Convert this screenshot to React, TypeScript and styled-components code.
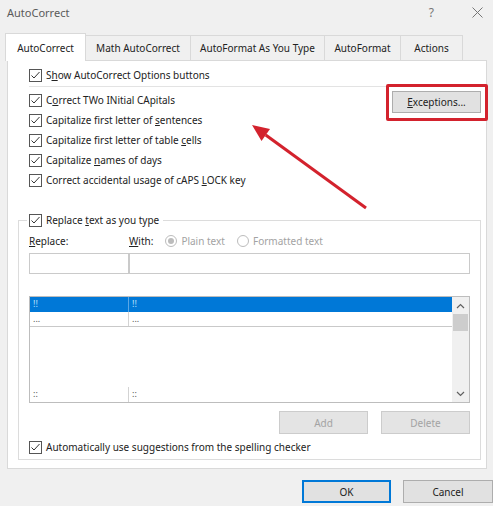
import styled, { createGlobalStyle } from 'styled-components';

const GlobalStyle = createGlobalStyle`
  html, body {
    margin: 0;
    padding: 0;
    background: #f0f0f0;
  }
  body {
    font-family: 'Noto Sans', 'Liberation Sans', sans-serif;
    font-size: 10px;
    color: #222;
  }
  * {
    box-sizing: border-box;
  }
`;

const Window = styled.div`
  position: relative;
  width: 493px;
  height: 506px;
  overflow: hidden;
  background: #f0f0f0;
  display: flex;
  flex-direction: column;
`;

const TitleBar = styled.div`
  height: 24px;
  display: flex;
  align-items: center;
  justify-content: space-between;
  padding: 0 10px 0 7px;
  color: #5a5a5a;
  font-size: 11px;
`;

const TitleButtons = styled.div`
  display: flex;
  align-items: center;
  gap: 38px;
  color: #767676;
  font-size: 12px;
`;

const TabStrip = styled.div`
  position: relative;
  z-index: 1;
  display: flex;
  align-items: flex-end;
  height: 28px;
  margin: 9px 0 -1px;
  padding-left: 5px;
`;

const Tab = styled.div<{ $active?: boolean; $w: number }>`
  width: ${(p) => p.$w}px;
  height: ${(p) => (p.$active ? 28 : 26)}px;
  margin-right: -1px;
  display: flex;
  align-items: center;
  justify-content: center;
  white-space: nowrap;
  background: ${(p) => (p.$active ? '#fff' : '#f0f0f0')};
  border: 1px solid #d9d9d9;
  border-bottom: ${(p) => (p.$active ? 'none' : '1px solid #d9d9d9')};
  z-index: ${(p) => (p.$active ? 2 : 1)};
`;

const Panel = styled.div`
  margin: 0 6px 0 7px;
  padding: 4px 5px 0 10px;
  background: #fff;
  border: 1px solid #d9d9d9;
  display: flex;
  flex-direction: column;
`;

const CheckRow = styled.div<{ $h?: number }>`
  height: ${(p) => p.$h ?? 20}px;
  display: flex;
  align-items: center;
  gap: 4px;
  white-space: nowrap;
`;

const Box = styled.span`
  width: 13px;
  height: 13px;
  border: 1px solid #555;
  background: #fff;
  display: inline-flex;
  align-items: center;
  justify-content: center;
  flex: none;
`;

const Indented = styled.div`
  padding-left: 11px;
`;

const Separator = styled.div`
  height: 1px;
  margin: 1px 2px 3px 11px;
  background: #e3e3e3;
`;

const OptionGroup = styled.div`
  display: flex;
  justify-content: space-between;
  align-items: flex-start;
  padding-left: 11px;
`;

const PushButton = styled.button<{ $w: number; $primary?: boolean; $disabled?: boolean }>`
  width: ${(p) => p.$w}px;
  height: 23px;
  padding: 0;
  font: inherit;
  color: ${(p) => (p.$disabled ? '#a3a3a3' : '#222')};
  background: ${(p) => (p.$disabled ? '#e4e4e4' : '#e1e1e1')};
  border: 1px solid ${(p) => (p.$primary ? '#0078d7' : p.$disabled ? '#cccccc' : '#adadad')};
  box-shadow: ${(p) => (p.$primary ? 'inset 0 0 0 1px #0078d7' : 'none')};
  flex: none;
`;

const ExceptionsButton = styled(PushButton)`
  margin-top: 1px;
  height: 22px;
`;

const Group = styled.fieldset`
  margin: 20px 0 8px;
  padding: 2px 10px 3px;
  min-width: 0;
  border: 1px solid #dcdcdc;
`;

const Legend = styled.legend`
  padding: 0 4px 0 2px;
  margin-left: -2px;
`;

const LabelRow = styled.div`
  height: 18px;
  display: flex;
  align-items: center;
`;

const FieldLabel = styled.span<{ $w?: number }>`
  width: ${(p) => (p.$w ? `${p.$w}px` : 'auto')};
  flex: none;
`;

const RadioOption = styled.span<{ $gap: number }>`
  display: inline-flex;
  align-items: center;
  gap: 4px;
  color: #a3a3a3;
  margin-left: ${(p) => p.$gap}px;
`;

const Radio = styled.span<{ $on?: boolean }>`
  width: 12px;
  height: 12px;
  border-radius: 50%;
  border: 1px solid #bcbcbc;
  background: #fff;
  display: inline-flex;
  align-items: center;
  justify-content: center;
  &::after {
    content: '';
    width: 6px;
    height: 6px;
    border-radius: 50%;
    background: ${(p) => (p.$on ? '#bcbcbc' : 'transparent')};
  }
`;

const InputRow = styled.div`
  margin-top: 3px;
  display: flex;
  height: 21px;
`;

const TextBox = styled.input<{ $w?: number }>`
  width: ${(p) => (p.$w ? `${p.$w}px` : 'auto')};
  flex: ${(p) => (p.$w ? 'none' : '1')};
  height: 21px;
  margin: 0;
  padding: 0 3px;
  border: 1px solid #cacaca;
  background: #fff;
  font: inherit;
  outline: none;
  min-width: 0;
`;

const EntryList = styled.div`
  margin-top: 22px;
  height: 107px;
  display: flex;
  border: 1px solid #bdbdbd;
  background: #fff;
`;

const ListBody = styled.div`
  flex: 1;
  display: flex;
  flex-direction: column;
`;

const ListRow = styled.div<{ $selected?: boolean; $ruled?: boolean }>`
  height: 15px;
  display: grid;
  grid-template-columns: 99px 1fr;
  background: ${(p) => (p.$selected ? '#0078d7' : '#fff')};
  border-bottom: ${(p) => (p.$ruled ? '1px solid #c9c9c9' : 'none')};
  color: ${(p) => (p.$selected ? '#bfe0fb' : '#555')};
  font-size: 9px;
  line-height: 14px;
`;

const Cell = styled.span<{ $divider?: boolean; $selected?: boolean }>`
  padding-left: 3px;
  border-right: ${(p) => (p.$divider ? `1px solid ${p.$selected ? '#5aa7e6' : '#d3d3d3'}` : 'none')};
`;

const ListGap = styled.div`
  flex: 1;
`;

const ScrollBar = styled.div`
  width: 17px;
  display: flex;
  flex-direction: column;
  background: #f0f0f0;
`;

const ScrollArrow = styled.div`
  height: 17px;
  display: flex;
  align-items: center;
  justify-content: center;
  flex: none;
`;

const Thumb = styled.div`
  height: 17px;
  margin: 0 1px;
  background: #cdcdcd;
`;

const ButtonRow = styled.div`
  margin-top: 8px;
  display: flex;
  justify-content: flex-end;
  gap: 13px;
`;

const AutoRow = styled(CheckRow)`
  margin-top: 4px;
`;

const Footer = styled.div`
  margin-top: 11px;
  display: flex;
  justify-content: flex-end;
  gap: 12px;
`;

const Highlight = styled.div`
  position: absolute;
  left: 386px;
  top: 84px;
  width: 102px;
  height: 37px;
  border: 3px solid #d3222d;
  border-radius: 2px;
`;

const Annotation = styled.svg`
  position: absolute;
  left: 0;
  top: 0;
  pointer-events: none;
`;

function Check() {
  return (
    <Box>
      <svg width="11" height="11" viewBox="0 0 11 11">
        <polyline points="1.5,5.5 4,8 9.5,2" fill="none" stroke="#333" strokeWidth="1" />
      </svg>
    </Box>
  );
}

function Chevron({ down }: { down?: boolean }) {
  return (
    <svg width="9" height="6" viewBox="0 0 9 6">
      <polyline
        points={down ? '1,1 4.5,4.5 8,1' : '1,5 4.5,1.5 8,5'}
        fill="none"
        stroke="#606060"
        strokeWidth="1.2"
      />
    </svg>
  );
}

export default function App() {
  return (
    <>
      <GlobalStyle />
      <Window>
        <TitleBar>
          <span>AutoCorrect</span>
          <TitleButtons>
            <span>?</span>
            <svg width="11" height="11" viewBox="0 0 11 11">
              <path d="M0.5 0.5 L10.5 10.5 M10.5 0.5 L0.5 10.5" stroke="#767676" strokeWidth="1" />
            </svg>
          </TitleButtons>
        </TitleBar>

        <TabStrip>
          <Tab $active $w={81}>AutoCorrect</Tab>
          <Tab $w={106}>Math AutoCorrect</Tab>
          <Tab $w={135}>AutoFormat As You Type</Tab>
          <Tab $w={77}>AutoFormat</Tab>
          <Tab $w={63}>Actions</Tab>
        </TabStrip>

        <Panel>
          <Indented>
            <CheckRow>
              <Check />
              <span>
                S<u>h</u>ow AutoCorrect Options buttons
              </span>
            </CheckRow>
          </Indented>
          <Separator />
          <OptionGroup>
            <div>
              <CheckRow>
                <Check />
                <span>
                  C<u>o</u>rrect TWo INitial CApitals
                </span>
              </CheckRow>
              <CheckRow>
                <Check />
                <span>
                  Capitalize first letter of <u>s</u>entences
                </span>
              </CheckRow>
              <CheckRow>
                <Check />
                <span>
                  Capitalize first letter of table <u>c</u>ells
                </span>
              </CheckRow>
              <CheckRow>
                <Check />
                <span>
                  Capitalize <u>n</u>ames of days
                </span>
              </CheckRow>
              <CheckRow>
                <Check />
                <span>
                  Correct accidental usage of cAPS <u>L</u>OCK key
                </span>
              </CheckRow>
            </div>
            <ExceptionsButton $w={89}>
              <u>E</u>xceptions...
            </ExceptionsButton>
          </OptionGroup>

          <Group>
            <Legend>
              <CheckRow>
                <Check />
                <span>
                  Replace <u>t</u>ext as you type
                </span>
              </CheckRow>
            </Legend>
            <LabelRow>
              <FieldLabel $w={100}>
                <u>R</u>eplace:
              </FieldLabel>
              <FieldLabel>
                <u>W</u>ith:
              </FieldLabel>
              <RadioOption $gap={12}>
                <Radio $on />
                Plain text
              </RadioOption>
              <RadioOption $gap={12}>
                <Radio />
                Formatted text
              </RadioOption>
            </LabelRow>
            <InputRow>
              <TextBox $w={100} readOnly />
              <TextBox readOnly />
            </InputRow>

            <EntryList>
              <ListBody>
                <ListRow $selected>
                  <Cell $divider $selected>!!</Cell>
                  <Cell>!!</Cell>
                </ListRow>
                <ListRow $ruled>
                  <Cell $divider>...</Cell>
                  <Cell>...</Cell>
                </ListRow>
                <ListGap />
                <ListRow>
                  <Cell $divider>::</Cell>
                  <Cell>::</Cell>
                </ListRow>
              </ListBody>
              <ScrollBar>
                <ScrollArrow>
                  <Chevron />
                </ScrollArrow>
                <Thumb />
                <ListGap />
                <ScrollArrow>
                  <Chevron down />
                </ScrollArrow>
              </ScrollBar>
            </EntryList>

            <ButtonRow>
              <PushButton $w={89} $disabled>
                Add
              </PushButton>
              <PushButton $w={89} $disabled>
                Delete
              </PushButton>
            </ButtonRow>

            <AutoRow $h={18}>
              <Check />
              <span>Automatically use suggestions from the spelling checker</span>
            </AutoRow>
          </Group>
        </Panel>

        <Footer>
          <PushButton $w={89} $primary>
            OK
          </PushButton>
          <PushButton $w={90}>Cancel</PushButton>
        </Footer>

        <Highlight />
        <Annotation width="493" height="506" viewBox="0 0 493 506">
          <line x1="366" y1="208" x2="265.7" y2="135" stroke="#d3222d" strokeWidth="3" />
          <polygon points="252,125 270,129 261.5,141" fill="#d3222d" />
        </Annotation>
      </Window>
    </>
  );
}
